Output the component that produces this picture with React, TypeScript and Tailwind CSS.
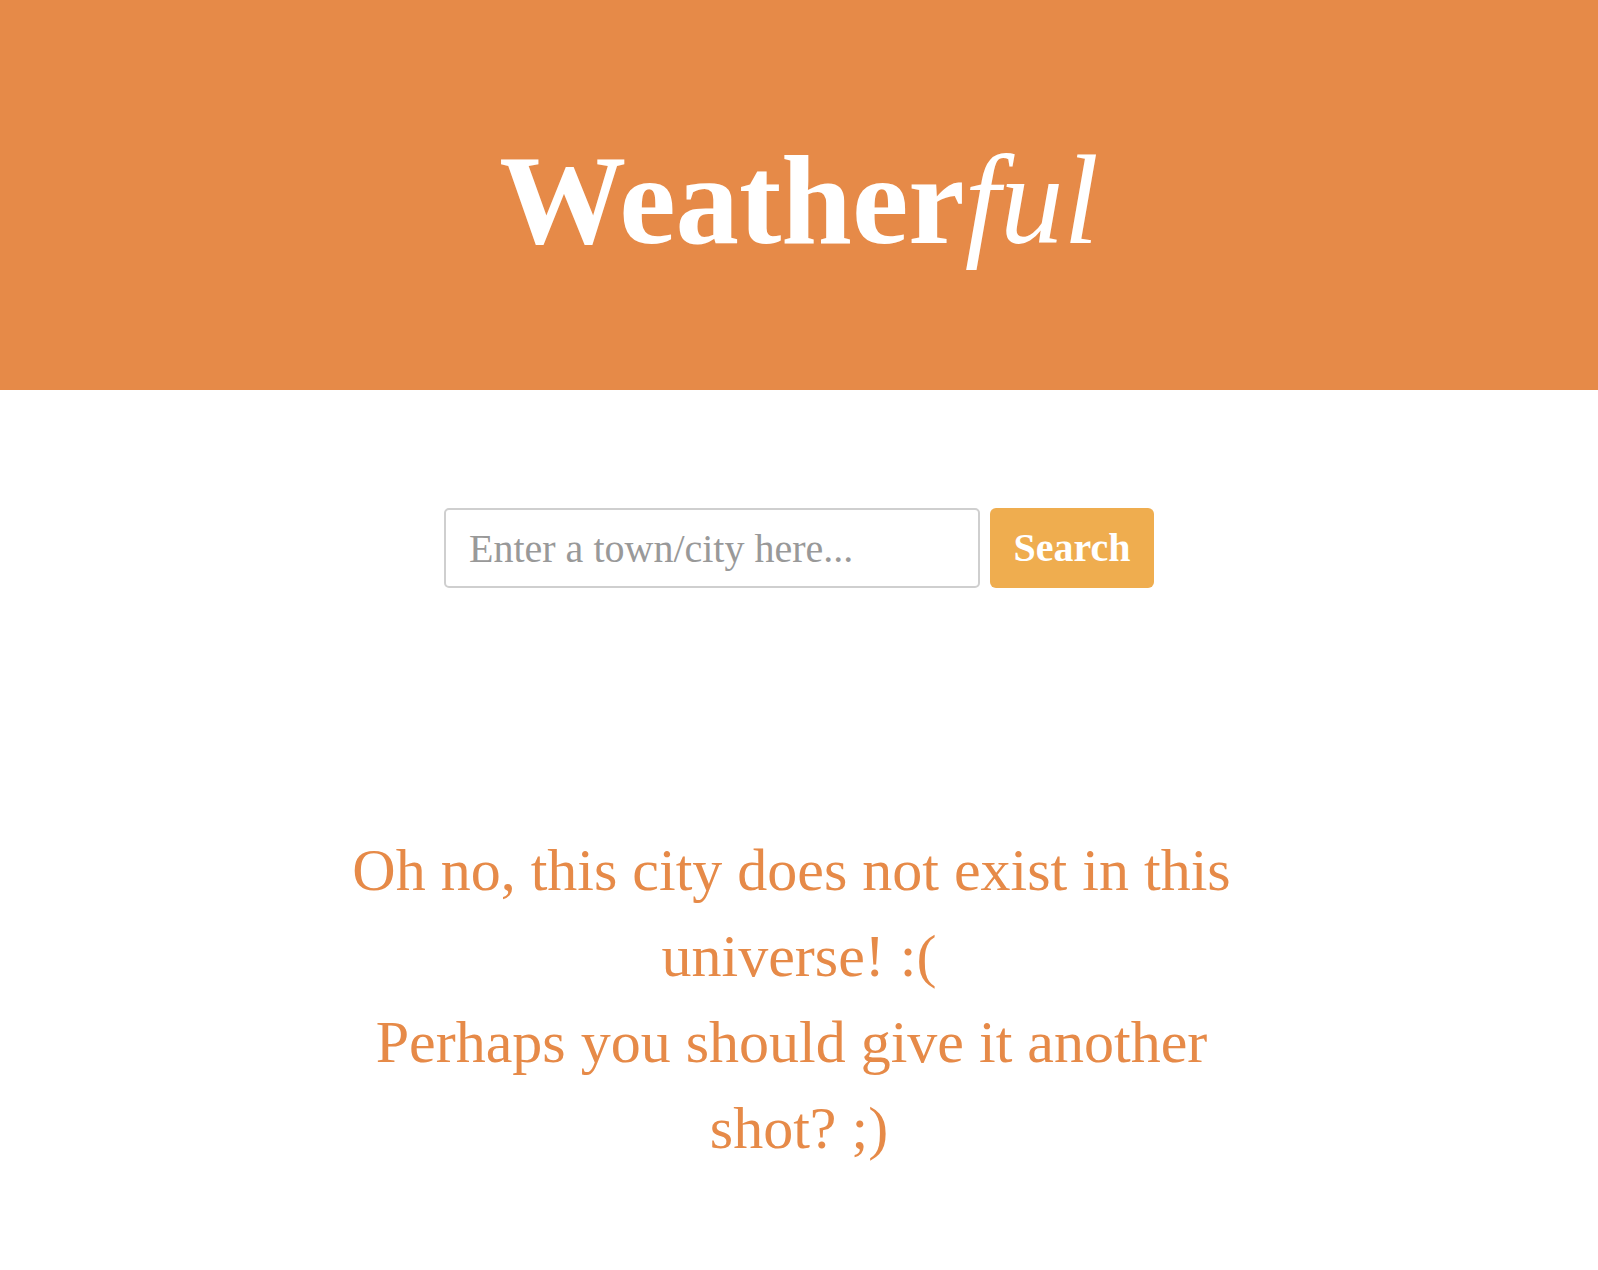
const App = () => {
  return (
    <div className="min-h-[1270px] bg-white font-['Liberation_Serif','Times_New_Roman',serif]">
      <header className="w-full h-[390px] bg-[#e68a48] pt-[137px]">
        <h1 className="text-white text-[127px] leading-none font-bold text-center">
          Weather<span className="italic font-normal">ful</span>
        </h1>
      </header>

      <main className="flex flex-col items-center">
        <form className="flex gap-[10px] mt-[118px]" onSubmit={(e) => e.preventDefault()}>
          <input
            type="text"
            placeholder="Enter a town/city here..."
            className="w-[536px] h-[80px] border-2 border-[#cfcfcf] rounded-[5px] px-[23px] text-[40px] text-[#555] placeholder:text-[#999] outline-none"
          />
          <button
            type="submit"
            className="h-[80px] w-[164px] bg-[#efad4f] rounded-[6px] text-white text-[40px] font-bold"
          >
            Search
          </button>
        </form>

        <p className="mt-[239px] w-[920px] text-center text-[60px] leading-[86px] text-[#e68a48] whitespace-break-spaces">
          Oh no, this city does not exist in this universe! :(
          <br />
          Perhaps you should give it another shot? ;)
        </p>
      </main>
    </div>
  );
};

export default App;
